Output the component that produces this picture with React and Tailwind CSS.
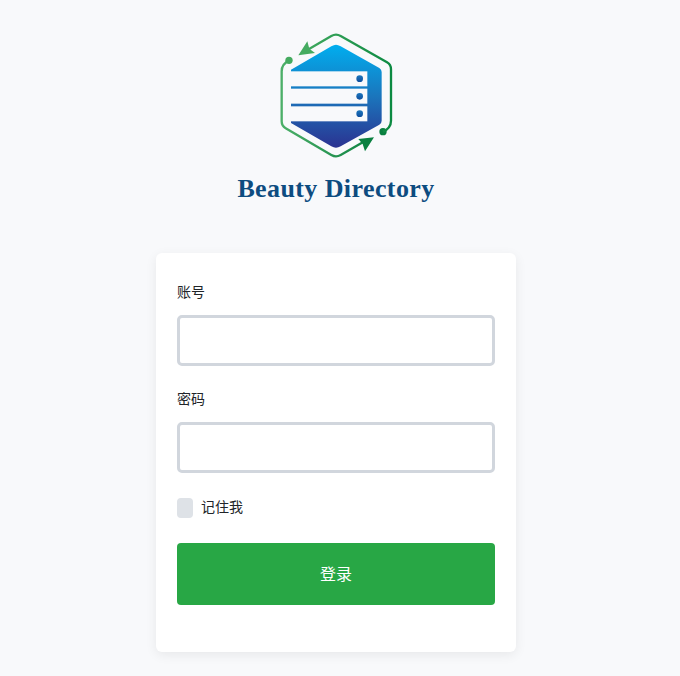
import React, { useState } from "react";

const cjk = "font-['Liberation_Sans','Noto_Sans_CJK_SC',sans-serif]";

const Logo = () => (
  <svg width="130" height="132" viewBox="120 10 390 396" className="mr-[2px] block">
    <defs>
      <linearGradient id="hexFill" x1="0" y1="60" x2="0" y2="372" gradientUnits="userSpaceOnUse">
        <stop offset="0" stopColor="#00aeef" />
        <stop offset="0.5" stopColor="#1b75bc" />
        <stop offset="1" stopColor="#2b3190" />
      </linearGradient>
      <linearGradient id="dotFill" x1="0" y1="0" x2="0" y2="1">
        <stop offset="0" stopColor="#1b75bc" />
        <stop offset="1" stopColor="#0f4f9e" />
      </linearGradient>
      <linearGradient id="ringLeft" x1="155" y1="0" x2="432" y2="0" gradientUnits="userSpaceOnUse">
        <stop offset="0" stopColor="#4caf68" />
        <stop offset="1" stopColor="#0a8040" />
      </linearGradient>
      <linearGradient id="ringRight" x1="205" y1="0" x2="483" y2="0" gradientUnits="userSpaceOnUse">
        <stop offset="0" stopColor="#45ab60" />
        <stop offset="1" stopColor="#0c8a42" />
      </linearGradient>
    </defs>
    <path
      d="M318 60 Q324 60 332 65 L448 130 Q455 134 455 142 L455 288 Q455 296 448 300 L332 365 Q318 373 304 365 L183 295 L183 135 L304 65 Q312 60 318 60 Z"
      fill="url(#hexFill)"
    />
    <rect x="183" y="140" width="229" height="45" fill="#f8f9fb" />
    <rect x="183" y="192" width="229" height="45" fill="#f8f9fb" />
    <rect x="183" y="245" width="229" height="45" fill="#f8f9fb" />
    <circle cx="389" cy="162" r="10" fill="url(#dotFill)" />
    <circle cx="389" cy="215" r="10" fill="url(#dotFill)" />
    <circle cx="389" cy="267" r="10" fill="url(#dotFill)" />
    <path
      d="M177 107 Q155 118 155 140 L155 290 Q155 304 167 311 L304 391 Q318 399 332 391 L405 349"
      fill="none"
      stroke="url(#ringLeft)"
      strokeWidth="7"
    />
    <polygon points="432,338 385,343 398,358 405,380" fill="#0a8040" />
    <circle cx="459" cy="321" r="11" fill="#0a8040" />
    <circle cx="177" cy="107" r="11" fill="#45ab60" />
    <path
      d="M459 321 Q483 310 483 288 L483 134 Q483 120 471 113 L332 34 Q318 26 304 34 L232 76"
      fill="none"
      stroke="url(#ringRight)"
      strokeWidth="7"
    />
    <polygon points="205,92 232,50 238,72 255,85" fill="#45ab60" />
  </svg>
);

const Field = ({ label, type, value, onChange }) => (
  <div>
    <label className="block text-sm leading-[21px] text-[#212529]">{label}</label>
    <input
      type={type}
      value={value}
      onChange={(e) => onChange(e.target.value)}
      className="mt-3 block h-[51px] w-full rounded-[5px] border-[3px] border-[#d1d6dd] bg-white px-3 text-sm outline-none"
    />
  </div>
);

const App = () => {
  const [account, setAccount] = useState("");
  const [password, setPassword] = useState("");

  return (
    <div className={`min-h-screen w-full bg-[#f8f9fb] ${cjk}`}>
      <div className="flex w-[672px] flex-col items-center pt-7 pb-6">
        <Logo />
        <p className="mt-[13px] h-[32px] font-['Liberation_Serif',serif] text-[26px] leading-[32px] font-bold tracking-[0.4px] text-[#0d4c80]">
          Beauty Directory
        </p>
        <form className="mt-[48px] w-[360px] rounded-md bg-white px-[21px] pt-[29px] pb-[47px] shadow-[0_3px_12px_rgba(0,0,0,0.07)]">
          <Field label="账号" type="text" value={account} onChange={setAccount} />
          <div className="mt-[23px]">
            <Field label="密码" type="password" value={password} onChange={setPassword} />
          </div>
          <label className="mt-[25px] flex items-center gap-2 text-sm leading-5 text-[#212529]">
            <span className="h-5 w-4 rounded bg-[#dee2e7]" />
            <span className="-mt-[2px]">记住我</span>
          </label>
          <button
            type="button"
            className="mt-[25px] h-[62px] w-full rounded bg-[#28a745] pt-[2px] text-base text-white"
          >
            登录
          </button>
        </form>
      </div>
    </div>
  );
};

export default App;
